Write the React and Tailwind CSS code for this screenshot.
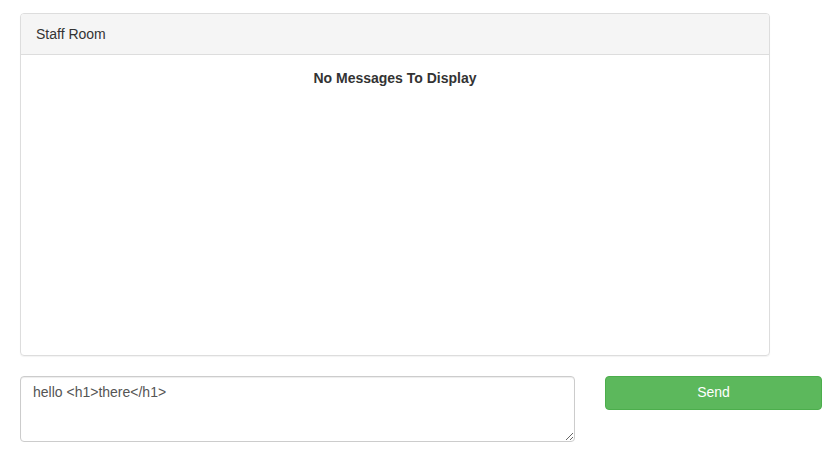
export default function App() {
  return (
    <div className="bg-white min-h-screen pt-[13px] pl-[20px] text-[14px] leading-[20px] text-[#333]" style={{ fontFamily: '"Liberation Sans", Arial, sans-serif' }}>
      <div className="w-[750px] border border-[#ddd] rounded-[4px] shadow-[0_1px_1px_rgba(0,0,0,0.05)]">
        <div className="h-[41px] px-[15px] py-[10px] bg-[#f5f5f5] border-b border-[#ddd] rounded-t-[3px] text-[#333]">
          Staff Room
        </div>
        <div className="h-[300px] px-[15px] pt-[13px] pb-[15px]">
          <div className="text-center font-bold">No Messages To Display</div>
        </div>
      </div>
      <div className="flex items-start mt-[20px]">
        <textarea
          className="w-[555px] h-[66px] border border-[#ccc] rounded-[4px] px-[12px] pt-[5px] pb-[7px] text-[#555] text-[14px] leading-[20px] shadow-[inset_0_1px_1px_rgba(0,0,0,0.075)] outline-none"
          style={{ fontFamily: '"Liberation Sans", Arial, sans-serif' }}
          defaultValue="hello <h1>there</h1>"
        />
        <button
          className="ml-[30px] w-[217px] h-[34px] pb-[2px] bg-[#5cb85c] border border-[#4cae4c] rounded-[4px] text-white text-[14px] leading-[20px]"
          style={{ fontFamily: '"Liberation Sans", Arial, sans-serif' }}
        >
          Send
        </button>
      </div>
    </div>
  );
}
